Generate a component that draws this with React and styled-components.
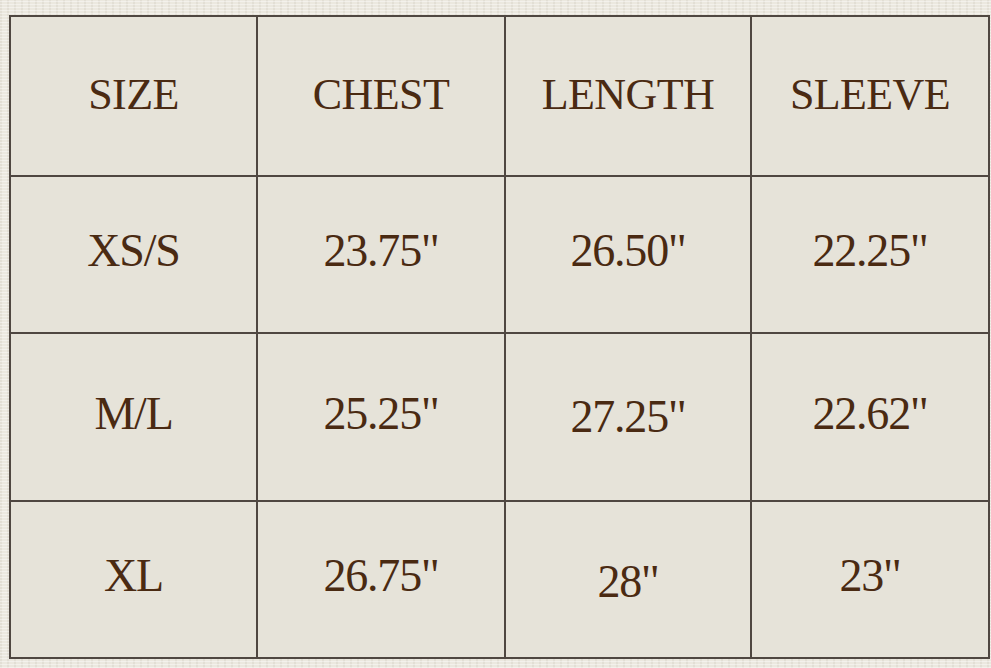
import React from "react";
import styled, { createGlobalStyle } from "styled-components";

const Global = createGlobalStyle`
  html, body {
    margin: 0;
    padding: 0;
    width: 991px;
    height: 668px;
    overflow: hidden;
    background-color: #ebe8df;
    background-image:
      repeating-linear-gradient(0deg, rgba(255,255,255,0.4) 0px, rgba(255,255,255,0.4) 1px, transparent 1px, transparent 3px),
      repeating-linear-gradient(90deg, rgba(190,184,170,0.2) 0px, rgba(190,184,170,0.2) 2px, transparent 2px, transparent 7px);
  }
`;

const Page = styled.main`
  padding: 15px 0 0 9px;
`;

const Chart = styled.div`
  display: grid;
  grid-template-columns: 245px 246px 244px 236px;
  grid-template-rows: 158px 155px 166px 155px;
  gap: 2px;
  padding: 2px;
  width: fit-content;
  background: #4f4741;
`;

const Cell = styled.div`
  display: flex;
  align-items: center;
  justify-content: center;
  background: #e6e3d9;
  color: #4a2a12;
  font-family: "Liberation Serif", "Times New Roman", serif;
  font-size: ${(p) => (p.$head ? "44px" : "46px")};
  letter-spacing: ${(p) => (p.$head ? "-0.6px" : "-1.2px")};
  padding-top: ${(p) => (p.$head ? 0 : p.$drop || 0)}px;
  padding-bottom: ${(p) => (p.$head ? 3 : 8 - (p.$drop || 0))}px;
  white-space: nowrap;
`;

const header = ["SIZE", "CHEST", "LENGTH", "SLEEVE"];
const rows = [
  ["XS/S", "23.75\"", "26.50\"", "22.25\""],
  ["M/L", "25.25\"", "27.25\"", "22.62\""],
  ["XL", "26.75\"", "28\"", "23\""],
];
const drops = { "1-2": 3, "2-2": 6 };

export default function App() {
  return (
    <>
      <Global />
      <Page>
        <Chart>
          {header.map((h) => (
            <Cell key={h} $head>
              {h}
            </Cell>
          ))}
          {rows.map((r, ri) =>
            r.map((v, ci) => (
              <Cell key={ri + "-" + ci} $drop={drops[ri + "-" + ci] || 0}>
                {v}
              </Cell>
            ))
          )}
        </Chart>
      </Page>
    </>
  );
}
